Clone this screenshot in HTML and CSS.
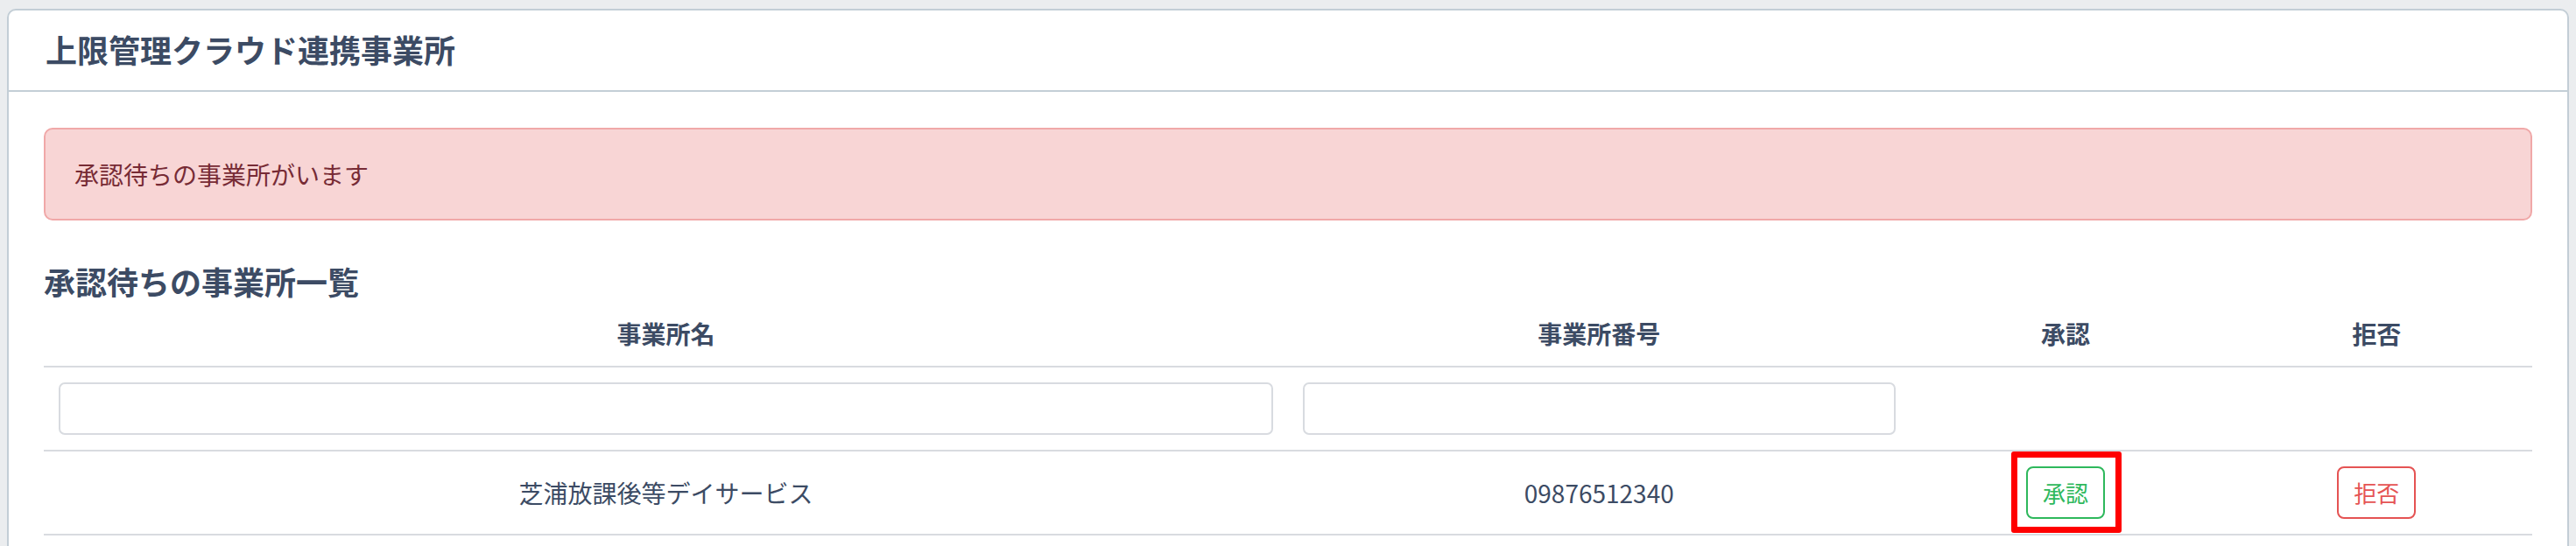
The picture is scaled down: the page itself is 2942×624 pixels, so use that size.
FILE: index.html
```html
<!DOCTYPE html>
<html lang="ja">
<head>
<meta charset="utf-8">
<title>上限管理クラウド連携事業所</title>
<link rel="stylesheet" href="styles.css">
</head>
<body>
<div class="page">
  <div class="card">
    <div class="card-header">上限管理クラウド連携事業所</div>
    <div class="card-body">
      <div class="alert">承認待ちの事業所がいます</div>
      <h2 class="section-title">承認待ちの事業所一覧</h2>
      <table class="list">
        <colgroup>
          <col class="col-name">
          <col class="col-number">
          <col class="col-action">
          <col class="col-action">
        </colgroup>
        <thead>
          <tr>
            <th>事業所名</th>
            <th>事業所番号</th>
            <th>承認</th>
            <th>拒否</th>
          </tr>
        </thead>
        <tbody>
          <tr class="filter-row">
            <td><input class="filter-input" type="text"></td>
            <td><input class="filter-input" type="text"></td>
            <td></td>
            <td></td>
          </tr>
          <tr>
            <td>芝浦放課後等デイサービス</td>
            <td>09876512340</td>
            <td><button class="btn btn-approve btn-highlight" type="button">承認</button></td>
            <td><button class="btn btn-reject" type="button">拒否</button></td>
          </tr>
        </tbody>
      </table>
    </div>
  </div>
</div>
</body>
</html>
```

FILE: styles.css
```css
html, body {
  margin: 0;
  padding: 0;
}

body {
  background: #ebedef;
  color: #3c4b64;
  font-family: "Noto Sans CJK JP", "Noto Sans", sans-serif;
  line-height: 1.5;
}

.page {
  padding: 10px 8px 0;
}

.card {
  background: #ffffff;
  border: 2px solid #c3ced6;
  border-radius: 10px;
}

.card-header {
  padding: 17px 42px 20px;
  font-size: 36px;
  line-height: 54px;
  font-weight: 700;
  border-bottom: 2px solid #c3ced6;
}

.card-body {
  padding: 41px 40px 40px;
}

.alert {
  background: #f8d5d5;
  border: 2px solid #f0a8a8;
  border-radius: 10px;
  color: #772b35;
  font-size: 28px;
  line-height: 42px;
  padding: 30px 33px;
}

.section-title {
  margin: 48px 0 0;
  font-size: 36px;
  line-height: 43px;
  font-weight: 700;
}

.list {
  width: 100%;
  border-collapse: collapse;
  table-layout: fixed;
  font-size: 28px;
}

.col-name { width: 50%; }
.col-number { width: 25%; }
.col-action { width: 12.5%; }

.list th {
  padding: 17px 17px 16px;
  line-height: 42px;
  font-weight: 700;
  text-align: center;
  border-bottom: 2px solid #d8dbe0;
}

.list td {
  padding: 17px;
  line-height: 42px;
  text-align: center;
  vertical-align: middle;
  border-bottom: 2px solid #d8dbe0;
}

.filter-input {
  display: block;
  width: 100%;
  height: 60px;
  box-sizing: border-box;
  border: 2px solid #d8dbe0;
  border-radius: 7px;
  background: #ffffff;
  font: inherit;
  margin: 0;
}

.btn {
  display: inline-block;
  vertical-align: middle;
  font-family: inherit;
  font-size: 26px;
  line-height: 38px;
  padding: 9px 17px;
  background: #ffffff;
  border: 2px solid currentColor;
  border-radius: 8px;
  margin: 0;
}

.btn-approve {
  color: #2eb85c;
}

.btn-reject {
  color: #e55353;
}

.btn-highlight {
  position: relative;
}

.btn-highlight::after {
  content: "";
  position: absolute;
  top: -19px;
  right: -21px;
  bottom: -18px;
  left: -19px;
  border: 7px solid #ff0000;
  border-radius: 3px;
  pointer-events: none;
}
```
